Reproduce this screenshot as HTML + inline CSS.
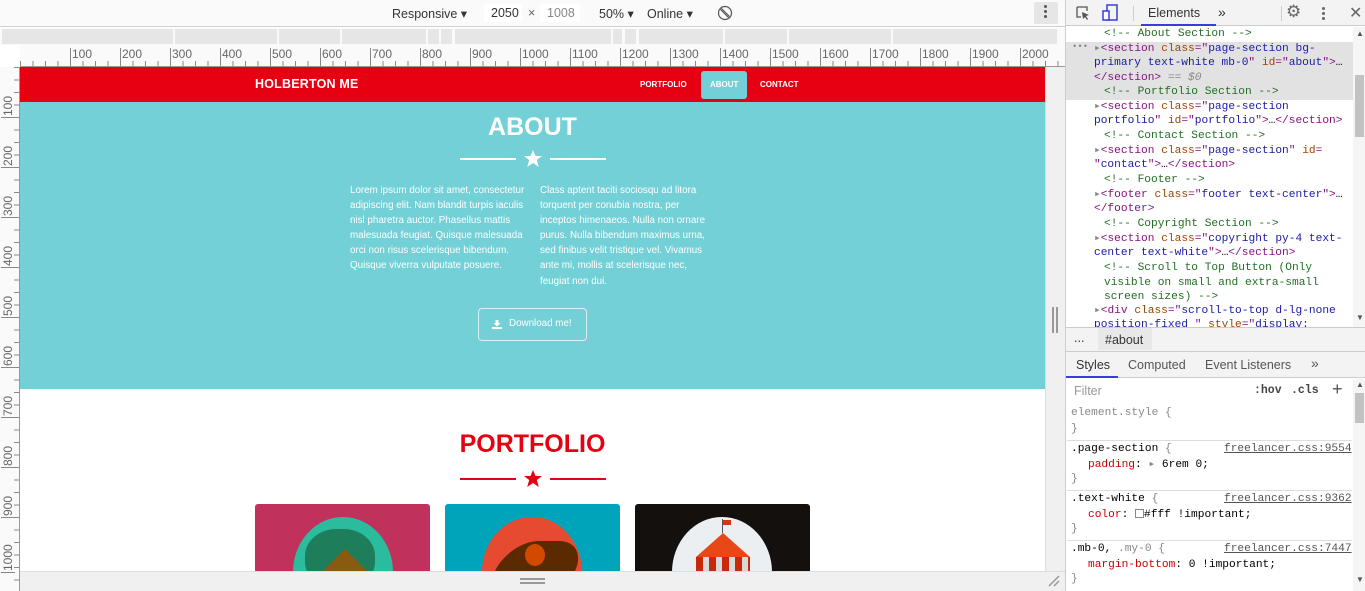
<!DOCTYPE html>
<html style="overflow:hidden;width:1365px;height:591px"><head><meta charset="utf-8"><style>
*{box-sizing:border-box;margin:0;padding:0}
body{width:1365px;height:591px;overflow:hidden;position:relative;background:#fff;font-family:"Liberation Sans","DejaVu Sans",sans-serif}
.abs{position:absolute}
#tb{left:0;top:0;width:1065px;height:27px;background:#fafafa;border-bottom:1px solid #d0d0d0;font-size:12.5px;color:#333}
#mq{left:0;top:28px;width:1065px;height:17px;background:#fafafa}
.seg{position:absolute;top:1px;height:15px;background:#e6e6e6}
#rh{left:20px;top:45px;width:1045px;height:22px;background:#fafafa;border-bottom:1px solid #999}
#rv{left:0;top:67px;width:20px;height:524px;background:#fafafa;border-right:1px solid #999;overflow:hidden}
.hl{position:absolute;top:3px;font-size:12px;color:#666;border-left:1px solid #888;padding-left:1px;height:16px;line-height:12px}
.vl{position:absolute;left:1px;font-size:12px;color:#666;transform-origin:0 0;transform:rotate(-90deg);border-left:1px solid #888;padding-left:1px;line-height:14px;white-space:nowrap}
#page{left:20px;top:67px;width:1025px;height:504px;overflow:hidden;background:#fff}
#nav{left:0;top:0;width:1025px;height:35px;background:#e60012;color:#fff;font-weight:bold}
#about{left:0;top:35px;width:1025px;height:287px;background:#72d0d6;color:#fff}
.p{position:absolute;font-size:9.8px;line-height:15.1px;width:180px}
#dt{left:1065px;top:0;width:300px;height:591px;background:#fff;border-left:1px solid #ccc;font-family:"Liberation Mono","DejaVu Sans Mono",monospace;font-size:11.2px;overflow:hidden}
.ln{position:absolute;left:28px;white-space:pre;line-height:14.6px}
.c{color:#236e25}.t{color:#881280}.a{color:#994500}.v{color:#1a1aa6}.g{color:#888}
.ui{font-family:"Liberation Sans","DejaVu Sans",sans-serif;font-size:12.5px;color:#333}
.rule{border-top:1px solid #ddd;position:absolute;left:1px;width:285px}
</style></head><body>
<div id="tb" class="abs">
 <span class="abs" style="left:392px;top:6px">Responsive ▾</span>
 <span class="abs" style="left:484px;top:4px;width:38px;height:18px;background:#fff"></span>
 <span class="abs" style="left:491px;top:6px">2050</span>
 <span class="abs" style="left:528px;top:6px;color:#666">×</span>
 <span class="abs" style="left:540px;top:4px;width:40px;height:18px;background:#fff"></span>
 <span class="abs" style="left:547px;top:6px;color:#888">1008</span>
 <span class="abs" style="left:599px;top:6px">50% ▾</span>
 <span class="abs" style="left:647px;top:6px">Online ▾</span>
 <svg class="abs" style="left:717px;top:5px" width="16" height="16" viewBox="0 0 16 16"><circle cx="8" cy="8" r="6.5" fill="none" stroke="#555" stroke-width="1.2"/><path d="M3.5 4.5L11.5 12.5M4.5 3.5L12.5 11.5" stroke="#555" stroke-width="1.2"/></svg>
 <span class="abs" style="left:1034px;top:2px;width:24px;height:22px;background:#e6e6e6;border-radius:2px"></span>
 <span class="abs" style="left:1044px;top:5px;width:3px;height:3px;background:#555;border-radius:50%;box-shadow:0 5px #555,0 10px #555"></span>
</div>
<div id="mq" class="abs">
 <div class="seg" style="left:2px;width:171px"></div>
 <div class="seg" style="left:175px;width:102px"></div>
 <div class="seg" style="left:279px;width:61px"></div>
 <div class="seg" style="left:342px;width:84px"></div>
 <div class="seg" style="left:428px;width:11px"></div>
 <div class="seg" style="left:441px;width:11px"></div>
 <div class="seg" style="left:455px;width:156px"></div>
 <div class="seg" style="left:613px;width:9px"></div>
 <div class="seg" style="left:625px;width:11px"></div>
 <div class="seg" style="left:639px;width:84px"></div>
 <div class="seg" style="left:725px;width:62px"></div>
 <div class="seg" style="left:789px;width:102px"></div>
 <div class="seg" style="left:893px;width:164px"></div>
</div>
<div id="rh" class="abs">
 <div class="abs" style="left:0;bottom:0;width:1045px;height:5px;background:repeating-linear-gradient(90deg,#888 0 1px,transparent 1px 12.5px)"></div>
 <div class="hl" style="left:50px">100</div><div class="hl" style="left:100px">200</div><div class="hl" style="left:150px">300</div><div class="hl" style="left:200px">400</div><div class="hl" style="left:250px">500</div><div class="hl" style="left:300px">600</div><div class="hl" style="left:350px">700</div><div class="hl" style="left:400px">800</div><div class="hl" style="left:450px">900</div><div class="hl" style="left:500px">1000</div><div class="hl" style="left:550px">1100</div><div class="hl" style="left:600px">1200</div><div class="hl" style="left:650px">1300</div><div class="hl" style="left:700px">1400</div><div class="hl" style="left:750px">1500</div><div class="hl" style="left:800px">1600</div><div class="hl" style="left:850px">1700</div><div class="hl" style="left:900px">1800</div><div class="hl" style="left:950px">1900</div><div class="hl" style="left:1000px">2000</div>
</div>
<div id="rv" class="abs">
 <div class="abs" style="right:0;top:0;width:5px;height:524px;background:repeating-linear-gradient(180deg,#888 0 1px,transparent 1px 12.5px)"></div>
 <div class="vl" style="top:51px">100</div><div class="vl" style="top:101px">200</div><div class="vl" style="top:151px">300</div><div class="vl" style="top:201px">400</div><div class="vl" style="top:251px">500</div><div class="vl" style="top:301px">600</div><div class="vl" style="top:351px">700</div><div class="vl" style="top:401px">800</div><div class="vl" style="top:451px">900</div><div class="vl" style="top:506px">1000</div>
</div>
<div id="page" class="abs">
 <div id="nav" class="abs">
  <span class="abs" style="left:235px;top:10px;font-size:12.5px;letter-spacing:.2px">HOLBERTON ME</span>
  <span class="abs" style="left:620px;top:13px;font-size:8px">PORTFOLIO</span>
  <span class="abs" style="left:681px;top:4px;width:46px;height:28px;background:#72d0d6;border-radius:3px"></span>
  <span class="abs" style="left:690px;top:13px;font-size:8px">ABOUT</span>
  <span class="abs" style="left:740px;top:13px;font-size:8px">CONTACT</span>
 </div>
 <div id="about" class="abs">
  <div class="abs" style="left:0;width:1025px;top:11px;text-align:center;font-size:25px;font-weight:bold">ABOUT</div>
  <div class="abs" style="left:440px;top:56px;width:56px;height:2px;background:#fff"></div>
  <div class="abs" style="left:530px;top:56px;width:56px;height:2px;background:#fff"></div>
  <svg class="abs" style="left:503px;top:48px" width="20" height="18" viewBox="0 0 20 18"><path d="M10 0L12.5 6H19L13.8 10L15.8 17L10 13L4.2 17L6.2 10L1 6H7.5Z" fill="#fff"/></svg>
  <div class="p" style="left:330px;top:81px;width:180px">Lorem ipsum dolor sit amet, consectetur adipiscing elit. Nam blandit turpis iaculis nisl pharetra auctor. Phasellus mattis malesuada feugiat. Quisque malesuada orci non risus scelerisque bibendum. Quisque viverra vulputate posuere.</div>
  <div class="p" style="left:520px;top:81px;width:172px">Class aptent taciti sociosqu ad litora torquent per conubia nostra, per inceptos himenaeos. Nulla non ornare purus. Nulla bibendum maximus urna, sed finibus velit tristique vel. Vivamus ante mi, mollis at scelerisque nec, feugiat non dui.</div>
  <div class="abs" style="left:458px;top:206px;width:109px;height:33px;border:1.5px solid rgba(255,255,255,.7);border-radius:4px;font-size:9.8px;line-height:30px;padding-left:30px">Download me!</div>
  <svg class="abs" style="left:472px;top:218px" width="10" height="9" viewBox="0 0 10 9"><path d="M3.5 0H6.5V3H8.5L5 6.5L1.5 3H3.5Z M0 7H10V9H0Z" fill="#fff"/></svg>
 </div>
 <div class="abs" style="left:0;width:1025px;top:363px;text-align:center;font-size:25px;font-weight:bold;color:#e60012">PORTFOLIO</div>
 <div class="abs" style="left:440px;top:411px;width:56px;height:2px;background:#e60012"></div>
 <div class="abs" style="left:530px;top:411px;width:56px;height:2px;background:#e60012"></div>
 <svg class="abs" style="left:503px;top:403px" width="20" height="18" viewBox="0 0 20 18"><path d="M10 0L12.5 6H19L13.8 10L15.8 17L10 13L4.2 17L6.2 10L1 6H7.5Z" fill="#e60012"/></svg>
 <div class="abs" style="left:235px;top:437px;width:175px;height:80px;background:#c0325c;border-radius:3px;overflow:hidden">
  <div class="abs" style="left:38px;top:13px;width:100px;height:110px;border-radius:50%;background:#2bbc9d"></div>
  <div class="abs" style="left:50px;top:25px;width:70px;height:60px;border-radius:45%;background:#1e7d5b"></div>
  <div class="abs" style="left:60px;top:45px;width:0;height:0;border-left:30px solid transparent;border-right:30px solid transparent;border-bottom:30px solid #8a5a10"></div>
 </div>
 <div class="abs" style="left:425px;top:437px;width:175px;height:80px;background:#00a4ba;border-radius:3px;overflow:hidden">
  <div class="abs" style="left:37px;top:13px;width:100px;height:110px;border-radius:50%;background:#e64b32"></div>
  <div class="abs" style="left:50px;top:37px;width:80px;height:60px;background:#5c2a00;border-radius:30px 30px 0 0;transform:skewX(-25deg)"></div>
  <div class="abs" style="left:80px;top:40px;width:20px;height:22px;border-radius:50%;background:#d24a00"></div>
 </div>
 <div class="abs" style="left:615px;top:437px;width:175px;height:80px;background:#13100e;border-radius:3px;overflow:hidden">
  <div class="abs" style="left:37px;top:13px;width:100px;height:110px;border-radius:50%;background:#eceff1"></div>
  <div class="abs" style="left:87px;top:15px;width:1px;height:14px;background:#555"></div>
  <div class="abs" style="left:88px;top:16px;width:8px;height:5px;background:#d13a10"></div>
  <div class="abs" style="left:61px;top:29px;width:0;height:0;border-left:27px solid transparent;border-right:27px solid transparent;border-bottom:24px solid #e84718"></div>
  <div class="abs" style="left:61px;top:53px;width:54px;height:20px;background:repeating-linear-gradient(90deg,#c62a08 0 7px,#d9d9d9 7px 13px)"></div>
 </div>
</div>
<div class="abs" style="left:1045px;top:67px;width:20px;height:504px;background:#f0f0f0;border-left:1px solid #ddd"></div>
<div class="abs" style="left:1052px;top:307px;width:2px;height:26px;background:#999;box-shadow:4px 0 #999"></div>
<div class="abs" style="left:20px;top:571px;width:1045px;height:20px;background:#f0f0f0;border-top:1px solid #ddd"></div>
<div class="abs" style="left:520px;top:578px;width:25px;height:2px;background:#999;box-shadow:0 4px #999"></div>
<svg class="abs" style="left:1047px;top:574px" width="14" height="14"><path d="M2 12L12 2M7 12L12 7" stroke="#999" stroke-width="1.5"/></svg>
<div id="dt" class="abs">
 <div class="abs" style="left:0;top:0;width:300px;height:26px;background:#f3f3f3;border-bottom:1px solid #ccc"></div>
 <svg class="abs" style="left:9px;top:5px" width="16" height="16"><path d="M2 2H12V6M2 2V12H6" fill="none" stroke="#555" stroke-width="1.3"/><path d="M7 7L14 10L11 11L13 14L12 15L10 12L8 14Z" fill="#555"/></svg>
 <svg class="abs" style="left:36px;top:4px" width="16" height="18"><rect x="5" y="1" width="10" height="15" fill="none" stroke="#3b3bde" stroke-width="1.5"/><rect x="1" y="7" width="6" height="9" fill="#fff" stroke="#3b3bde" stroke-width="1.5"/></svg>
 <div class="abs" style="left:67px;top:6px;width:1px;height:15px;background:#ccc"></div>
 <span class="abs ui" style="left:82px;top:6px">Elements</span>
 <div class="abs" style="left:75px;top:24px;width:75px;height:2px;background:#3b3bde"></div>
 <span class="abs ui" style="left:152px;top:4px;font-size:14px">»</span>
 <div class="abs" style="left:215px;top:6px;width:1px;height:15px;background:#ccc"></div>
 <span class="abs ui" style="left:220px;top:2px;font-size:17px;color:#666">⚙</span>
 <span class="abs" style="left:256px;top:7px;width:3px;height:3px;background:#666;border-radius:50%;box-shadow:0 5px #666,0 10px #666"></span>
 <span class="abs ui" style="left:283px;top:3px;font-size:16px;color:#666">✕</span>
 <div class="abs" style="left:0;top:42px;width:288px;height:58px;background:#e2e2e2"></div>
 <span class="abs g" style="left:6px;top:42px;font-size:9px">•••</span>
 <div class="ln c" style="top:27px;left:38px">&lt;!-- About Section --&gt;</div>
 <div class="ln" style="top:42px"><span class="g">▸</span><span class="t">&lt;section</span> <span class="a">class</span><span class="t">="</span><span class="v">page-section bg-</span></div>
 <div class="ln" style="top:56px"><span class="v">primary text-white mb-0</span><span class="t">"</span> <span class="a">id</span><span class="t">="</span><span class="v">about</span><span class="t">"&gt;</span>…</div>
 <div class="ln" style="top:71px"><span class="t">&lt;/section&gt;</span> <span class="g"><i>== $0</i></span></div>
 <div class="ln c" style="top:85px;left:38px">&lt;!-- Portfolio Section --&gt;</div>
 <div class="ln" style="top:100px"><span class="g">▸</span><span class="t">&lt;section</span> <span class="a">class</span><span class="t">="</span><span class="v">page-section</span></div>
 <div class="ln" style="top:114px"><span class="v">portfolio</span><span class="t">"</span> <span class="a">id</span><span class="t">="</span><span class="v">portfolio</span><span class="t">"&gt;</span>…<span class="t">&lt;/section&gt;</span></div>
 <div class="ln c" style="top:129px;left:38px">&lt;!-- Contact Section --&gt;</div>
 <div class="ln" style="top:144px"><span class="g">▸</span><span class="t">&lt;section</span> <span class="a">class</span><span class="t">="</span><span class="v">page-section</span><span class="t">"</span> <span class="a">id</span><span class="t">=</span></div>
 <div class="ln" style="top:158px"><span class="t">"</span><span class="v">contact</span><span class="t">"&gt;</span>…<span class="t">&lt;/section&gt;</span></div>
 <div class="ln c" style="top:173px;left:38px">&lt;!-- Footer --&gt;</div>
 <div class="ln" style="top:188px"><span class="g">▸</span><span class="t">&lt;footer</span> <span class="a">class</span><span class="t">="</span><span class="v">footer text-center</span><span class="t">"&gt;</span>…</div>
 <div class="ln" style="top:202px"><span class="t">&lt;/footer&gt;</span></div>
 <div class="ln c" style="top:217px;left:38px">&lt;!-- Copyright Section --&gt;</div>
 <div class="ln" style="top:232px"><span class="g">▸</span><span class="t">&lt;section</span> <span class="a">class</span><span class="t">="</span><span class="v">copyright py-4 text-</span></div>
 <div class="ln" style="top:246px"><span class="v">center text-white</span><span class="t">"&gt;</span>…<span class="t">&lt;/section&gt;</span></div>
 <div class="ln c" style="top:261px;left:38px">&lt;!-- Scroll to Top Button (Only
visible on small and extra-small
screen sizes) --&gt;</div>
 <div class="ln" style="top:304px"><span class="g">▸</span><span class="t">&lt;div</span> <span class="a">class</span><span class="t">="</span><span class="v">scroll-to-top d-lg-none</span></div>
 <div class="ln" style="top:318px;height:9px;overflow:hidden"><span class="v">position-fixed </span><span class="t">"</span> <span class="a">style</span><span class="t">="</span><span class="v">display:</span></div>
 <div class="abs" style="left:287px;top:27px;width:13px;height:300px;background:#f5f5f5"></div>
 <div class="abs" style="left:289px;top:75px;width:9px;height:62px;background:#c2c2c2"></div>
 <span class="abs ui" style="left:290px;top:29px;font-size:8px;color:#555">▲</span>
 <span class="abs ui" style="left:290px;top:313px;font-size:8px;color:#555">▼</span>
 <div class="abs" style="left:0;top:327px;width:300px;height:25px;background:#f3f3f3;border-top:1px solid #ccc;border-bottom:1px solid #ccc"></div>
 <span class="abs ui" style="left:8px;top:331px">...</span>
 <div class="abs" style="left:32px;top:328px;width:54px;height:22px;background:#e8e8e8"></div>
 <span class="abs ui" style="left:39px;top:333px">#about</span>
 <div class="abs" style="left:0;top:352px;width:300px;height:26px;background:#f3f3f3;border-bottom:1px solid #ccc"></div>
 <span class="abs ui" style="left:10px;top:358px">Styles</span>
 <div class="abs" style="left:0;top:376px;width:52px;height:2px;background:#3b3bde"></div>
 <span class="abs ui" style="left:62px;top:358px;color:#555">Computed</span>
 <span class="abs ui" style="left:139px;top:358px;color:#555">Event Listeners</span>
 <span class="abs ui" style="left:245px;top:355px;font-size:14px;color:#555">»</span>
 <div class="abs" style="left:3px;top:381px;width:175px;height:20px;background:#fff"></div>
 <span class="abs ui" style="left:8px;top:384px;color:#999">Filter</span>
 <span class="abs" style="left:188px;top:384px;font-weight:bold;color:#444;font-size:11.5px">:hov</span>
 <span class="abs" style="left:225px;top:384px;font-weight:bold;color:#444;font-size:11.5px">.cls</span>
 <span class="abs ui" style="left:266px;top:379px;font-size:18px;color:#555">+</span>
 <div class="abs" style="left:0;top:402px;width:288px;height:189px;background:#fff"></div>
 <div class="ln g" style="left:5px;top:406px">element.style {</div>
 <div class="ln g" style="left:5px;top:422px">}</div>
 <div class="rule" style="top:440px"></div>
 <div class="ln" style="left:5px;top:442px">.page-section <span class="g">{</span></div>
 <div class="ln" style="left:158px;top:442px;color:#555;text-decoration:underline">freelancer.css:9554</div>
 <div class="ln" style="left:22px;top:458px"><span style="color:#c80000">padding</span>: <span class="g">▸</span> 6rem 0;</div>
 <div class="ln g" style="left:5px;top:472px">}</div>
 <div class="rule" style="top:490px"></div>
 <div class="ln" style="left:5px;top:492px">.text-white <span class="g">{</span></div>
 <div class="ln" style="left:158px;top:492px;color:#555;text-decoration:underline">freelancer.css:9362</div>
 <div class="ln" style="left:22px;top:508px"><span style="color:#c80000">color</span>: <span style="display:inline-block;width:9px;height:9px;border:1px solid #888;vertical-align:-1px"></span>#fff !important;</div>
 <div class="ln g" style="left:5px;top:522px">}</div>
 <div class="rule" style="top:540px"></div>
 <div class="ln" style="left:5px;top:542px">.mb-0, <span class="g">.my-0 {</span></div>
 <div class="ln" style="left:158px;top:542px;color:#555;text-decoration:underline">freelancer.css:7447</div>
 <div class="ln" style="left:22px;top:558px"><span style="color:#c80000">margin-bottom</span>: 0 !important;</div>
 <div class="ln g" style="left:5px;top:572px;height:14px;overflow:hidden">}</div>
 <div class="abs" style="left:287px;top:379px;width:13px;height:212px;background:#f5f5f5"></div>
 <div class="abs" style="left:289px;top:393px;width:9px;height:30px;background:#c2c2c2"></div>
 <span class="abs ui" style="left:290px;top:380px;font-size:8px;color:#555">▲</span>
 <span class="abs ui" style="left:290px;top:575px;font-size:8px;color:#555">▼</span>
</div>
</body></html>
